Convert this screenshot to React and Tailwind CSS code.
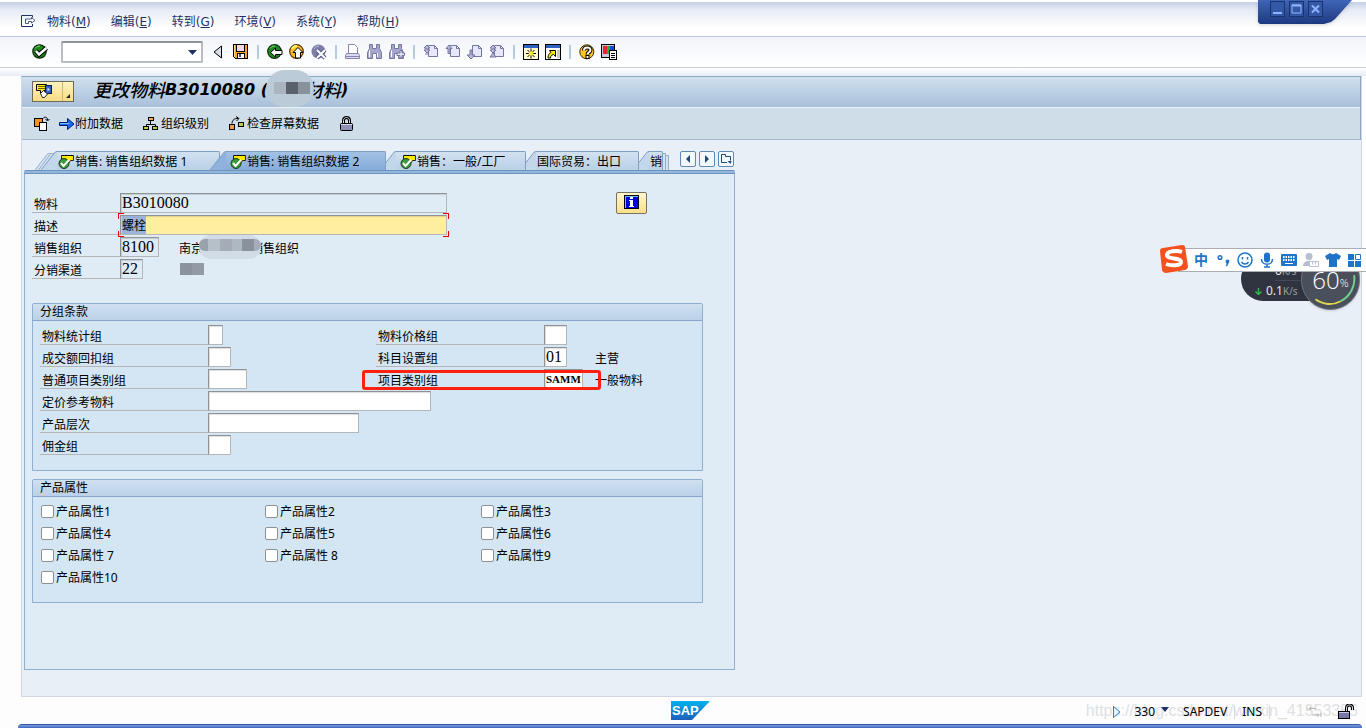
import { useEffect, useRef } from "react";
import clsx from "clsx";

const ICON = "h-4 w-4 flex-none";

/* ---------- toolbar icons ---------- */
function IconMenu() {
  return (
    <svg className="h-3 w-4 flex-none" viewBox="0 0 16 12" fill="none" stroke="#1f3263">
      <path d="M11.500 2.500V.5H.5v11h11V9" />
      <path d="M4.500 8.500v-4.500h6V2.500l3.500 3-3.500 2.500V6.500h-3v2z" fill="#fff" strokeWidth=".8" />
    </svg>
  );
}

function IconEnter() {
  return (
    <svg className={ICON} viewBox="0 0 16 16">
      <circle cx="7.500" cy="7.500" r="6.700" fill="#1e8a1e" stroke="#0a2a0a" strokeWidth="1.200" />
      <path d="M3 4.500A5 5 0 0 1 8 2" stroke="#7fe07f" fill="none" />
      <path d="M4 7l3 3.500L14.500 4" fill="none" stroke="#000" strokeWidth="4.500" />
      <path d="M4 7l3 3.500L14.500 4" fill="none" stroke="#fff" strokeWidth="2.500" />
    </svg>
  );
}

function IconCollapse() {
  return (
    <svg className={ICON} viewBox="0 0 16 16">
      <path d="M10.500 2v12L3 8z" fill="#d9dde6" stroke="#000" />
    </svg>
  );
}

function IconSave() {
  return (
    <svg className={ICON} viewBox="0 0 16 16" shapeRendering="crispEdges">
      <path d="M0 0h15v15H2L0 13z" fill="#000" />
      <path d="M1 1h13v13H2L1 13z" fill="#f0a22a" />
      <path d="M1 1h1v12H1z" fill="#ffe08a" />
      <rect x="3" y="1" width="9" height="7" fill="#000" />
      <rect x="4" y="1" width="7" height="6" fill="#efd9ee" />
      <rect x="4" y="9" width="8" height="5" fill="#000" />
      <rect x="5" y="10" width="6" height="4" fill="#fff" />
      <rect x="6" y="10" width="2" height="3" fill="#4a4a6a" />
    </svg>
  );
}

function IconBack() {
  return (
    <svg className={ICON} viewBox="0 0 16 16">
      <circle cx="7.500" cy="7.500" r="6.800" fill="#1e8a1e" stroke="#0a2a0a" strokeWidth="1.200" />
      <path d="M3 4.500A5 5 0 0 1 8 2" stroke="#7fe07f" fill="none" />
      <path d="M3.500 8.500L8.500 4v2.500h6.500v4H8.500V13z" fill="#fff" stroke="#000" />
    </svg>
  );
}

function IconExit() {
  return (
    <svg className={ICON} viewBox="0 0 16 16">
      <circle cx="7.500" cy="7.500" r="6.800" fill="#fb2" stroke="#5a3200" strokeWidth="1.200" />
      <path d="M3 5A5 5 0 0 1 8 2" stroke="#ff6" fill="none" strokeWidth="2" />
      <path d="M9 3.500l5 5h-2.500v5.500H6.500V8.500H4z" fill="#fff" stroke="#000" />
    </svg>
  );
}

function IconCancel() {
  return (
    <svg className={ICON} viewBox="0 0 16 16">
      <circle cx="7.500" cy="7.500" r="7" fill="#7d7fa8" />
      <path d="M3 5A5 5 0 0 1 8 2" stroke="#b9bad6" fill="none" />
      <path d="M6 6l8 8M14 6l-8 8" stroke="#5c5e85" strokeWidth="4" />
      <path d="M6 6l8 8M14 6l-8 8" stroke="#fff" strokeWidth="2" />
    </svg>
  );
}

function IconPrint() {
  return (
    <svg className={ICON} viewBox="0 0 16 16" fill="#fff" stroke="#8486b0">
      <path d="M3.500 9.500v-9h6l3 3v6" />
      <path d="M1.500 9.500h12l1 2v3h-14v-3z" fill="#d9daee" />
      <path d="M1 12.500h13" />
    </svg>
  );
}

function IconFind({ next }) {
  return (
    <svg className={ICON} viewBox="0 0 16 16">
      <path d="M2.500.5h3v4h4v-4h3v4l2 4v6h-5v-5h-4v5h-5v-6l2-4z" fill="#a5a7cf" stroke="#74769f" />
      <path d="M2.500 6v7M10.500 9v4" stroke="#fff" />
      {next && <path d="M8 9h3V6.500h2V9h2.500v2.500H13V14h-2v-2.500H8z" fill="#e4e5f4" stroke="#74769f" />}
    </svg>
  );
}

function IconPage({ kind }) {
  const arrows = {
    first: "M4 1L1 4h2v2H1l3 3 3-3H5V4h2zM2 10h4",
    prev: "M4 1L1 4.500h2v5h2v-5h2z",
    next: "M3 6v5H0l4 4 4-4H5V6z",
    last: "M4 1L1 4h2v2H1l3 3-3 4h6L4 9l3-3H5V4h2z",
  };
  return (
    <svg className={ICON} viewBox="0 0 16 16" stroke="#74769f">
      <path d="M5.500 1.500h6l3 3v8h-9z" fill="#e6e7fa" />
      <path d="M11.500 1.500v3h3" fill="none" />
      <path d={arrows[kind]} fill="#b9badb" />
    </svg>
  );
}

function IconSession() {
  return (
    <svg className={ICON} viewBox="0 0 16 16">
      <rect width="16" height="16" fill="#000" />
      <rect x="1" y="1" width="14" height="3" fill="#2b62c4" />
      <rect x="1" y="4" width="14" height="11" fill="#fffbd0" />
      <path d="M8 4.500v10M3 9.500h10M4.500 6l7 7M11.500 6l-7 7" stroke="#000" />
      <circle cx="8" cy="9.500" r="2.200" fill="#ffef1a" />
    </svg>
  );
}

function IconShortcut() {
  return (
    <svg className={ICON} viewBox="0 0 16 16">
      <rect width="16" height="16" fill="#000" />
      <rect x="1" y="1" width="14" height="3" fill="#2b62c4" />
      <rect x="1" y="4" width="14" height="11" fill="#fff" />
      <path d="M12 6h3v8h-3z" fill="#c9c9c9" />
      <path d="M3 14c0-4 2-5 3-5.500L4.500 6.500h6v6L8.500 10.500C6.500 11 5.500 12 5.500 14z" fill="#ffe800" stroke="#000" />
    </svg>
  );
}

function IconHelp() {
  return (
    <svg className={ICON} viewBox="0 0 16 16">
      <circle cx="7.800" cy="7.800" r="7" fill="#ffc619" stroke="#3a2a00" />
      <path d="M5 6.500c0-4 6.500-4 6.500-.5 0 2.500-3 2-3 4.500" fill="none" stroke="#000" strokeWidth="4" />
      <path d="M5 6.500c0-4 6.500-4 6.500-.5 0 2.500-3 2-3 4.500" fill="none" stroke="#fff" strokeWidth="2" />
      <rect x="7" y="11.500" width="3" height="3" fill="#fff" stroke="#000" />
    </svg>
  );
}

function IconLayout() {
  return (
    <svg className={ICON} viewBox="0 0 16 16" shapeRendering="crispEdges">
      <rect width="14" height="14" fill="#000" />
      <rect x="1" y="1" width="12" height="12" fill="#c8c8d8" />
      <rect x="2" y="2" width="4" height="8" fill="#e8262b" />
      <rect x="6" y="2" width="3" height="8" fill="#21b528" />
      <rect x="9" y="2" width="4" height="8" fill="#2640e0" />
      <rect x="8" y="6" width="8" height="10" fill="#000" />
      <rect x="9" y="7" width="6" height="8" fill="#fff" />
      <path d="M10 9.500h4M10 11.500h4M10 13.500h4" stroke="#000" />
    </svg>
  );
}

function IconServices() {
  return (
    <svg className="h-4 w-[18px] flex-none" viewBox="0 0 18 16">
      <path d="M1.500 1.500h10v6h-3l-3 3v-3h-4z" fill="#ffed1f" stroke="#000" />
      <path d="M3 3.500h7M3 5.500h7" stroke="#6b6000" />
      <rect x="10.500" y="2.500" width="6" height="8" fill="#2f62ca" stroke="#0a1c55" />
      <path d="M12.500 4.500v4l2.500-2z" fill="#bfe3ff" />
      <path d="M5.500 10.500l3-3 4 3.500-3 3.500h-2z" fill="#fff" stroke="#222" />
    </svg>
  );
}

function IconOther() {
  return (
    <svg className={ICON} viewBox="0 0 16 16">
      <rect x=".5" y="2.500" width="8" height="8" fill="#f29422" stroke="#000" />
      <rect x="5.500" y="6.500" width="7" height="8" fill="#fff" stroke="#000" />
      <path d="M9 2.500c1-2 4.500-2 4.500 1.500M11.500 3l2 2 2-2" fill="none" stroke="#000" />
    </svg>
  );
}

function IconArrow() {
  return (
    <svg className={ICON} viewBox="0 0 16 16">
      <path d="M.5 6.500h8v-4l6.500 5.500-6.500 5.500v-4h-8z" fill="#1b6df0" stroke="#001a70" />
      <path d="M1 7.500h9" stroke="#7ec3ff" />
    </svg>
  );
}

function IconOrg() {
  return (
    <svg className={ICON} viewBox="0 0 16 16" stroke="#000">
      <path d="M7.500 5v4M3.500 11V8.500h9V11" fill="none" />
      <rect x="5.500" y="1.500" width="5" height="3" fill="#f5b04a" />
      <rect x=".5" y="10.500" width="5" height="3" fill="#b6cf45" />
      <rect x="9.500" y="10.500" width="5" height="3" fill="#b6cf45" />
    </svg>
  );
}

function IconCheckData() {
  return (
    <svg className={ICON} viewBox="0 0 16 16" stroke="#000">
      <rect x=".5" y="8.500" width="5" height="5" fill="#f5a03a" />
      <rect x="9.500" y="6.500" width="5" height="4" fill="#b6cf45" />
      <path d="M3 7.500C3 4 6 2 9 2.500M7 .5l3 2-2.500 2.500" fill="none" />
    </svg>
  );
}

function IconLock() {
  return (
    <svg className={ICON} viewBox="0 0 16 16">
      <path d="M4.500 8V4.500c0-4 6-4 6 0V8" fill="none" stroke="#000" strokeWidth="3" />
      <path d="M4.500 8V4.500c0-4 6-4 6 0V8" fill="none" stroke="#dcdce8" />
      <rect x="1.500" y="7.500" width="12" height="7" rx="1" fill="#8f92b8" stroke="#000" />
      <path d="M2 8.500h11" stroke="#d6d7ea" />
    </svg>
  );
}

function IconDone() {
  return (
    <svg className="h-4 w-[17px] flex-none" viewBox="0 0 17 16">
      <path d="M3.500 1.500h12v5h-3l-2 3-7-3z" fill="#ffe800" stroke="#222" />
      <path d="M4 1.500h12" stroke="#000" strokeDasharray="2 1" />
      <circle cx="6" cy="9.500" r="5" fill="#3b9a3b" stroke="#1a3a1a" />
      <path d="M3 9l2.500 3L11 6" fill="none" stroke="#fff" strokeWidth="2" />
    </svg>
  );
}

function SapLogo() {
  return (
    <svg className="h-[19px] w-[39px]" viewBox="0 0 39 19" role="img" aria-label="SAP">
      <defs>
        <linearGradient id="sapBlue" x2="0" y2="1">
          <stop offset="0" stopColor="#00b2ee" />
          <stop offset="1" stopColor="#1e5fbb" />
        </linearGradient>
      </defs>
      <path d="M0 0h39L21 19H0z" fill="url(#sapBlue)" />
      <text x="1" y="14" fontFamily="Liberation Sans" fontWeight="700" fontSize="13" fill="#fff">
        SAP
      </text>
    </svg>
  );
}

/* ---------- pieces ---------- */
const MENU = [
  ["物料", "M"],
  ["编辑", "E"],
  ["转到", "G"],
  ["环境", "V"],
  ["系统", "Y"],
  ["帮助", "H"],
];

function MenuBar() {
  return (
    <nav className="flex h-[37px] items-center gap-5 border-b border-[#bcc6da] bg-[linear-gradient(#fff_2px,#c6d1e8_2px,#e6ebf5_10px,#fff_28px)] pt-2 pl-[21px] font-['DejaVu_Sans','Noto_Sans_CJK_SC',sans-serif] text-[#1f3263]">
      <button className="-mr-2.5 -mt-0.5" aria-label="菜单"><IconMenu /></button>
      {MENU.map(([name, key]) => (
        <button key={key} className="leading-5">
          {name}(<u>{key}</u>)
        </button>
      ))}
    </nav>
  );
}

function Sep() {
  return (
    <span className="flex w-1.5 justify-center">
      <span className="h-3.5 w-0.5 bg-[#b4cbe0]" />
    </span>
  );
}

function ToolBar() {
  return (
    <div className="flex h-[31px] items-center gap-1.5 border-b border-[#c9ced8] bg-linear-to-b from-[#f2f5fb] to-white pl-8">
      <button aria-label="回车"><IconEnter /></button>
      <div className="mx-[7px] mr-0.5 flex h-[22px] w-[142px] items-center rounded-xs border-2 border-[#b9bcc2] border-t-[#8e9299] bg-white">
        <input aria-label="命令" className="h-full min-w-0 flex-1 px-1 outline-none" />
        <button aria-label="展开" className="px-1">
          <svg className="h-[5px] w-[9px]" viewBox="0 0 9 5"><path d="M0 0h9L4.500 5z" fill="#1f3263" /></svg>
        </button>
      </div>
      <button aria-label="收起"><IconCollapse /></button>
      <button aria-label="保存"><IconSave /></button>
      <Sep />
      <button aria-label="返回"><IconBack /></button>
      <button aria-label="退出"><IconExit /></button>
      <button aria-label="取消"><IconCancel /></button>
      <Sep />
      <button aria-label="打印"><IconPrint /></button>
      <button aria-label="查找"><IconFind /></button>
      <button aria-label="查找下一个"><IconFind next /></button>
      <Sep />
      <button aria-label="首页"><IconPage kind="first" /></button>
      <button aria-label="上一页"><IconPage kind="prev" /></button>
      <button aria-label="下一页"><IconPage kind="next" /></button>
      <button aria-label="末页"><IconPage kind="last" /></button>
      <Sep />
      <button aria-label="新建会话"><IconSession /></button>
      <button aria-label="创建快捷方式"><IconShortcut /></button>
      <Sep />
      <button aria-label="帮助"><IconHelp /></button>
      <button aria-label="布局"><IconLayout /></button>
    </div>
  );
}

function TitleBar() {
  return (
    <header className="flex h-[31px] items-center border-b border-[#e9f2f9] bg-linear-to-b from-[#cfe0ee] to-[#a9c0da] pl-2.5">
      <div className="-mt-0.5 flex h-[21px] w-[42px] border border-[#6d6a58] bg-linear-to-b from-[#fff3bd] to-[#f6dc83]">
        <button aria-label="对象服务" className="flex w-[30px] items-center border-r border-[#c9b677] pl-0.5">
          <IconServices />
        </button>
        <button aria-label="更多服务" className="flex flex-1 items-end justify-end p-[3px]">
          <svg className="h-1 w-1" viewBox="0 0 4 4"><path d="M4 0v4H0z" fill="#222" /></svg>
        </button>
      </div>
      <h1 className="-mt-1 ml-[19px] flex items-center text-[18px] leading-6 font-medium italic">
        更改物料
        <span className="font-['DejaVu_Sans'] text-base font-bold whitespace-pre">B3010080 (</span>
        <span className="relative h-6 w-[37px]">
          <span className="absolute -top-2 -left-0.5 z-10 h-[37px] w-12 rounded-full bg-[#bccbd8]">
            <span className="absolute top-3 left-2 flex h-3">
              <i className="w-3 bg-[#a9b4be]" />
              <i className="w-3 bg-[#59626b]" />
              <i className="w-3 bg-[#88929b]" />
            </span>
          </span>
        </span>
        材料
        <span className="font-['DejaVu_Sans'] text-base font-bold">)</span>
      </h1>
    </header>
  );
}

function AppBar() {
  return (
    <div className="flex h-8 items-center border-b border-[#a3b5ca] bg-[#cfdde8] pl-3 leading-5">
      <button aria-label="选择其他物料"><IconOther /></button>
      <button className="ml-[9px] flex items-center"><IconArrow />附加数据</button>
      <button className="ml-5 flex items-center gap-0.5"><IconOrg />组织级别</button>
      <button className="ml-5 flex items-center gap-0.5"><IconCheckData />检查屏幕数据</button>
      <button aria-label="锁定" className="ml-5"><IconLock /></button>
    </div>
  );
}

function Tab({ label, done, active, className, width }) {
  return (
    <button
      role="tab"
      aria-selected={!!active}
      className={clsx("relative flex h-[19px] flex-none", active ? "z-20 -ml-2.5" : "-ml-1.5", className)}
    >
      <svg className="h-[19px] w-4 flex-none" viewBox="0 0 16 19">
        <path d="M0 19L13 2.500Q14 .5 16 .5V19z" fill={active ? "#8eb2dc" : "#c3d7ea"} />
        <path d="M0 19L13 2.500Q14 .5 16 .5" fill="none" stroke="#7f9fc2" />
      </svg>
      <span
        className={clsx(
          "flex h-full items-center overflow-hidden rounded-tr-xs border-t border-r border-[#7f9fc2] pt-0.5 leading-4 whitespace-nowrap",
          active ? "bg-linear-to-b from-[#a3c1e4] to-[#86acd9]" : "bg-linear-to-b from-[#d2e1f0] to-[#b9d0e6]",
          width
        )}
      >
        {done && <IconDone />}
        {label}
      </span>
    </button>
  );
}

function TabStrip() {
  return (
    <div className="flex h-[19px] w-[710px]">
      <div role="tablist" className="flex pl-[11px]">
        <svg className="h-[19px] w-5 flex-none" viewBox="0 0 20 19">
          <path d="M0 19L12 3.500Q13 2.500 15 2.500h5V19z" fill="#d3e2f0" />
          <path d="M0 19L12 3.500Q13 2.500 15 2.500h5M3.500 19L15 3.500M7 19L18 3.500" fill="none" stroke="#94afcc" />
        </svg>
        <Tab label="销售: 销售组织数据 1" done className="-ml-3.5" width="w-[163px] pl-px" />
        <Tab label="销售: 销售组织数据 2" done active width="w-[160px] pl-1" />
        <Tab label="销售：一般/工厂" done className="z-10" width="w-[130px] pl-1" />
        <Tab label="国际贸易：出口" className="z-[5]" width="w-[103px] pl-px" />
        <Tab label="销" className="z-[4]" width="w-[14px] pl-px" />
        <i className="mt-0.5 w-[3px] border-t border-r border-[#94afcc] bg-[#d3e2f0]" />
        <i className="mt-1 w-[3px] border-t border-r border-[#94afcc] bg-[#d3e2f0]" />
      </div>
      <div className="ml-auto flex gap-[3px]">
        <StepButton label="向左"><path d="M9 3v8L5 7z" fill="#1f4a78" /></StepButton>
        <StepButton label="向右"><path d="M5 3v8L9 7z" fill="#1f4a78" /></StepButton>
        <StepButton label="列表">
          <path d="M8 10.500H2.500v-8h4v2h5v4" fill="none" stroke="#1f4a78" />
          <path d="M8.500 9h4l-1 3z" fill="#1f4a78" />
        </StepButton>
      </div>
    </div>
  );
}

function StepButton({ label, children }) {
  return (
    <button aria-label={label} className="h-4 w-4 rounded-xs border border-[#5f89b5] bg-[#f3f8fd]">
      <svg className="h-3.5 w-3.5" viewBox="0 0 14 14">{children}</svg>
    </button>
  );
}

const BOX = "h-5 border border-[#b4b6b8] border-t-[#8f9295] border-l-[#8f9295] px-px outline-none shadow-[inset_1px_1px_1px_#0002]";
const SERIF = "font-['Liberation_Serif','Noto_Sans_CJK_SC',serif] text-base leading-4";

function Row({ id, label, labelWidth, children }) {
  return (
    <div className="flex h-5 items-stretch">
      <label htmlFor={id} className={clsx("border-b border-[#b5b5b5] pt-0.5 pl-0.5 leading-5", labelWidth)}>
        {label}
      </label>
      {children}
    </div>
  );
}

function Header() {
  const descRef = useRef(null);

  useEffect(() => {
    descRef.current.focus();
    descRef.current.select();
  }, []);

  return (
    <div className="flex">
      <div className="flex w-[415px] flex-col gap-0.5">
        <Row id="matnr" label="物料" labelWidth="w-[88px]">
          <input id="matnr" readOnly value="B3010080" className={clsx(BOX, SERIF, "w-[327px] bg-[#dfebf5]")} />
        </Row>
        <Row id="maktx" label="描述" labelWidth="w-[88px]">
          <div className="relative">
            <input
              id="maktx"
              ref={descRef}
              defaultValue="螺栓"
              className={clsx(BOX, "w-[327px] bg-[#ffeea0] selection:bg-[#9ab3d8] selection:text-black")}
            />
            <i className="absolute -top-0.5 -left-0.5 h-1.5 w-1.5 border-t border-l border-[#e00000]" />
            <i className="absolute -top-0.5 -right-0.5 h-1.5 w-1.5 border-t border-r border-[#e00000]" />
            <i className="absolute -bottom-0.5 -left-0.5 h-1.5 w-1.5 border-b border-l border-[#e00000]" />
            <i className="absolute -right-0.5 -bottom-0.5 h-1.5 w-1.5 border-r border-b border-[#e00000]" />
          </div>
        </Row>
        <Row id="vkorg" label="销售组织" labelWidth="w-[88px]">
          <input id="vkorg" readOnly value="8100" className={clsx(BOX, SERIF, "w-[39px] bg-[#dfebf5]")} />
          <span className="relative ml-5 flex pt-0.5 leading-5">
            南京
            <span className="w-12" />
            销售组织
            <span className="absolute -top-0.5 left-5 h-6 w-[62px] rounded-full bg-[#d1dce7]">
              <span className="absolute top-1 left-0 flex h-3">
                <i className="w-[9px] rounded-l-full bg-[#9aa3ad]" />
                <i className="w-3 bg-[#b6c0c9]" />
                <i className="w-3 bg-[#a4acb6]" />
                <i className="w-2.5 bg-[#aeb8c3]" />
                <i className="w-3 bg-[#8a929c]" />
                <i className="w-[7px] rounded-r-full bg-[#a5aeb8]" />
              </span>
            </span>
          </span>
        </Row>
        <Row id="vtweg" label="分销渠道" labelWidth="w-[88px]">
          <input id="vtweg" readOnly value="22" className={clsx(BOX, SERIF, "w-[23px] bg-[#dfebf5]")} />
          <span className="ml-[37px] flex items-center">
            <i className="h-3 w-3 bg-[#8a929c]" />
            <i className="h-3 w-3 bg-[#929aa5]" />
          </span>
        </Row>
      </div>
      <button
        aria-label="信息"
        className="-mt-px ml-[169px] flex h-[22px] w-[31px] items-center justify-center rounded-xs border border-[#77735f] bg-linear-to-b from-[#fff6cc] to-[#f9e08b]"
      >
        <svg className="-mt-0.5 h-3.5 w-[15px]" viewBox="0 0 15 14" shapeRendering="crispEdges">
          <rect width="15" height="14" fill="#000" />
          <rect x="1" y="1" width="13" height="12" fill="#7ab8f0" />
          <rect x="2" y="2" width="12" height="11" fill="#0000e6" />
          <path d="M6 2h3v2H6zM5 5h4v6h1v1H5v-1h1V6H5z" fill="#fff" />
        </svg>
      </button>
    </div>
  );
}

function Group({ title, children, className }) {
  return (
    <section className={clsx("w-[671px] rounded-t-xs border border-[#8eafd2] bg-[#d4e6f4]", className)}>
      <h2 className="h-[17px] border-b border-[#86a6cb] bg-linear-to-b from-[#d0e0f0] to-[#bad1e7] pl-[7px] leading-4">
        {title}
      </h2>
      {children}
    </section>
  );
}

const LEFT_FIELDS = [
  { id: "versg", label: "物料统计组", width: "w-[15px]" },
  { id: "bonus", label: "成交额回扣组", width: "w-[23px]" },
  { id: "mtpos0", label: "普通项目类别组", width: "w-[39px]" },
  { id: "pmatn", label: "定价参考物料", width: "w-[223px]" },
  { id: "prodh", label: "产品层次", width: "w-[151px]" },
  { id: "provg", label: "佣金组", width: "w-[23px]" },
];

function Grouping() {
  return (
    <Group title="分组条款" className="mt-6 pb-[15px]">
      <div className="flex pt-1 pl-[7px]">
        <div className="flex w-[336px] flex-col gap-0.5">
          {LEFT_FIELDS.map((f) => (
            <Row key={f.id} id={f.id} label={f.label} labelWidth="w-[168px] flex-none">
              <input id={f.id} className={clsx(BOX, "relative flex-none bg-white", f.width)} />
            </Row>
          ))}
        </div>
        <div className="flex flex-col gap-0.5">
          <Row id="kondm" label="物料价格组" labelWidth="w-[168px]">
            <input id="kondm" className={clsx(BOX, "w-[23px] bg-white")} />
          </Row>
          <Row id="ktgrm" label="科目设置组" labelWidth="w-[168px]">
            <input id="ktgrm" defaultValue="01" className={clsx(BOX, SERIF, "w-[23px] bg-white")} />
            <span className="ml-7 pt-0.5 leading-5">主营</span>
          </Row>
          <div className="relative">
            <Row id="mtpos" label="项目类别组" labelWidth="w-[168px]">
              <input
                id="mtpos"
                defaultValue="SAMM"
                className={clsx(BOX, "w-[39px] bg-white font-['Liberation_Serif',serif] text-[11px] font-bold")}
              />
              <span className="ml-3 pt-0.5 leading-5">一般物料</span>
            </Row>
            <i className="absolute top-px -left-3.5 h-5 w-[239px] rounded-[3px] border-3 border-[#ff2010]" />
          </div>
        </div>
      </div>
    </Group>
  );
}

const ATTRS = ["1", "2", "3", "4", "5", "6", " 7", " 8", "9", "10"];

function Attributes() {
  return (
    <Group title="产品属性" className="mt-2 pb-[15px]">
      <div className="grid grid-cols-[224px_216px_1fr] gap-y-0.5 pt-1 pl-2">
        {ATTRS.map((n) => (
          <label key={n} className="flex h-5 items-center gap-0.5 whitespace-pre">
            <input
              type="checkbox"
              className="h-[13px] w-[13px] appearance-none rounded-xs border border-[#8e9194] bg-white"
            />
            <span className="pt-0.5">{"产品属性" + n}</span>
          </label>
        ))}
      </div>
    </Group>
  );
}

function StatusBar() {
  return (
    <footer className="bg-[#fdfdfd]">
      <div className="grid h-[27px] grid-cols-[1fr_auto_1fr] items-center pl-3.5">
        <span />
        <SapLogo />
        <div className="relative flex items-center justify-end pr-3 leading-5">
          <span className="pointer-events-none absolute right-2 font-['Liberation_Sans'] text-base text-[#dfe1e4]">
            https://blog.csdn.net/weixin_41353355
          </span>
          <div className="relative flex items-center pt-0.5">
            <svg className="h-3 w-2" viewBox="0 0 8 12"><path d="M.5 .5v11l6.500-5.500z" fill="#e8f3fb" stroke="#3d7eb0" /></svg>
            <span className="ml-[13px]">330</span>
            <svg className="-mt-1 ml-1.5 h-[5px] w-2" viewBox="0 0 8 5"><path d="M0 0h8L4 5z" fill="#1f3263" /></svg>
            <span className="ml-3.5">SAPDEV</span>
            <i className="mx-[7px] h-3.5 w-px bg-[#d5dae2]" />
            <span>INS</span>
            <i className="ml-[7px] h-3.5 w-px bg-[#d5dae2]" />
            <svg className="ml-9 h-3 w-4" viewBox="0 0 16 12" fill="none" stroke="#b5b5b5">
              <path d="M1 1v4M3 2.500h7M5 1L3 2.500 5 4M15 7v4M6 9h7M11 7.500L13 9l-2 1.500" />
            </svg>
            <svg className="ml-4 h-4 w-4" viewBox="0 0 16 16">
              <path d="M8.500 8V4c0-4 6-4 6 0v2" fill="none" stroke="#000" strokeWidth="3" />
              <path d="M8.500 8V4c0-4 6-4 6 0v2" fill="none" stroke="#dcdce8" />
              <rect x=".5" y="7.500" width="11" height="7" fill="#7679a6" stroke="#000" />
              <path d="M1 8.500h10" stroke="#c6c7e0" />
            </svg>
          </div>
        </div>
      </div>
      <div className="mr-1 ml-[18px] h-1 rounded-t-2xl border-t border-[#3558a8] bg-linear-to-b from-[#7f9fe0] to-[#3f64bd]" />
    </footer>
  );
}

/* ---------- things floating over the window ---------- */
function WindowButtons() {
  return (
    <div className="absolute top-0 right-3.5 h-6 w-[94px] drop-shadow">
      <div className="flex h-full gap-1 bg-linear-to-b from-[#3f65b8] to-[#1d3a80] pt-px pl-3 [clip-path:polygon(0_0,100%_0,77px_19px,73px_22px,66px_24px,2px_24px,0_22px)]">
        <WinButton label="最小化"><path d="M3 12h9" strokeWidth="2" /></WinButton>
        <WinButton label="最大化"><path d="M3 4h9v8H3z" /><path d="M3 4.500h9" strokeWidth="2" /></WinButton>
        <WinButton label="关闭"><path d="M4 4.500l7 7M11 4.500l-7 7" strokeWidth="2" /></WinButton>
      </div>
    </div>
  );
}

function WinButton({ label, children }) {
  return (
    <button aria-label={label} className="h-4 w-[15px] border border-[#1a336e] bg-[#3458a5]">
      <svg className="h-3.5 w-[13px]" viewBox="1 1 13 14" fill="none" stroke="#8fb4ff">{children}</svg>
    </button>
  );
}

function SpeedBall() {
  return (
    <div className="absolute top-[249px] right-1.5 h-[61px] w-[119px]">
      <div className="absolute top-2 left-0 h-11 w-[90px] rounded-l-[22px] bg-[#2f3440] pt-1 pl-[34px] text-[#e8e8e8]">
        <div className="h-5 border-b border-[#444957] leading-5">0<small className="text-[10px] text-[#9a9da6]">K/s</small></div>
        <div className="-ml-5 flex items-center leading-5">
          <svg className="mr-1 h-[7px] w-[7px]" viewBox="0 0 7 7" fill="none" stroke="#30b84a" strokeWidth="1.500"><path d="M3.500 0v6M.5 3.500l3 3 3-3" /></svg>
          0.1<small className="text-[10px] text-[#9a9da6]">K/s</small>
        </div>
      </div>
      <div className="absolute right-0 flex h-[61px] w-[59px] items-center justify-center rounded-full border border-[#70747f] bg-[#4a4f5c] font-['Open_Sans'] text-2xl font-light text-white shadow">
        60<small className="mt-2 text-[11px]">%</small>
        <svg className="absolute inset-0 h-full w-full" viewBox="0 0 59 61" fill="none" strokeWidth="2">
          <path d="M54 26A25 26 0 0 1 40 53" stroke="#6fd28d" />
          <path d="M40 53A25 26 0 0 1 14 51" stroke="#dfd84e" />
        </svg>
      </div>
    </div>
  );
}

function ImeBar() {
  return (
    <div className="absolute top-[248px] right-0 flex h-6 w-[188px] items-center gap-1.5 border-y border-[#a9adb3] bg-white pl-[15px] text-[#1f74c9]">
      <svg className="absolute -top-1 -left-[18px] h-7 w-7" viewBox="0 0 28 28">
        <path d="M3 3l19-3q3 0 3 2l3 19q0 3-3 4L6 28q-3 0-4-3L0 6q0-3 3-3z" fill="#f4511e" />
        <path d="M22 7c-5-2-15-1-15 3 0 5 14 2 14 7 0 4-10 4-15 2" fill="none" stroke="#fff" strokeWidth="4" />
      </svg>
      <button className="w-4 text-sm leading-5 font-bold">中</button>
      <svg className={ICON} viewBox="0 0 16 16" fill="none" stroke="currentColor" strokeWidth="1.500">
        <circle cx="5" cy="5.500" r="1.800" />
        <path d="M11 8h3v2l-2 4h-1l1-3h-1z" fill="currentColor" strokeWidth=".5" />
      </svg>
      <svg className={ICON} viewBox="0 0 16 16" fill="none" stroke="currentColor" strokeWidth="1.500">
        <circle cx="8" cy="8" r="7" />
        <path d="M5.500 5v2.500M10.500 5v2.500M4.500 10c1.500 2.500 5.500 2.500 7 0" />
      </svg>
      <svg className={ICON} viewBox="0 0 16 16" fill="none" stroke="currentColor" strokeWidth="1.500">
        <rect x="5" y=".5" width="6" height="10" rx="3" fill="currentColor" stroke="none" />
        <path d="M2.500 7c0 7 11 7 11 0M8 12v3M5 15h6" />
      </svg>
      <svg className={ICON} viewBox="0 0 16 16">
        <rect y="2" width="16" height="12" rx="1" fill="currentColor" />
        <path d="M2 5h12M2 8h12" stroke="#fff" strokeWidth="2" strokeDasharray="1.500 1" />
        <path d="M4 11.500h8" stroke="#fff" />
      </svg>
      <svg className={ICON} viewBox="0 0 16 16" fill="#b4bfd0">
        <circle cx="6" cy="4.500" r="3.500" />
        <path d="M0 14c0-7 12-7 12 0z" />
        <path d="M6.500 9.500h9v5h-9zM9.500 9.500v3M12.500 9.500v3" stroke="#b4bfd0" fill="#fff" />
      </svg>
      <svg className={ICON} viewBox="0 0 16 16" fill="currentColor">
        <path d="M5 1q3 2.500 6 0l5 3-2 4-2-1v8H4V7L2 8 0 4z" />
      </svg>
      <svg className={ICON} viewBox="0 0 16 16" fill="currentColor">
        <path d="M1 2h6v6H1zM1 9h6v6H1zM8 9h6v6H8z" />
        <path d="M8.500 2.500h5v5h-5z" fill="none" stroke="currentColor" />
      </svg>
    </div>
  );
}

export default function App() {
  return (
    <div className="relative flex min-h-screen flex-col overflow-hidden bg-[#fdfdfe] font-['Noto_Sans','Noto_Sans_CJK_SC',sans-serif] text-xs text-black">
      <MenuBar />
      <ToolBar />
      <div className="h-2 bg-linear-to-b from-white to-[#e6ecf5]" />
      <main className="mr-1 ml-[21px] flex flex-1 flex-col border border-[#d0d6e4] border-t-[#8ea9c2] bg-[#e8eff7]">
        <div className="border-r border-[#8ea9c2]">
          <TitleBar />
          <AppBar />
        </div>
        <div className="mt-[11px] pl-0.5">
          <TabStrip />
          <div className="h-1 w-[711px] rounded-t-xs border-y border-[#6d95bd] bg-[#93b6dc]" />
          <div className="w-[711px] border border-t-0 border-[#8eb0cf] bg-[#dfebf5] px-[7px] pt-[19px] pb-[66px]">
            <Header />
            <Grouping />
            <Attributes />
          </div>
        </div>
      </main>
      <StatusBar />
      <WindowButtons />
      <SpeedBall />
      <ImeBar />
    </div>
  );
}
